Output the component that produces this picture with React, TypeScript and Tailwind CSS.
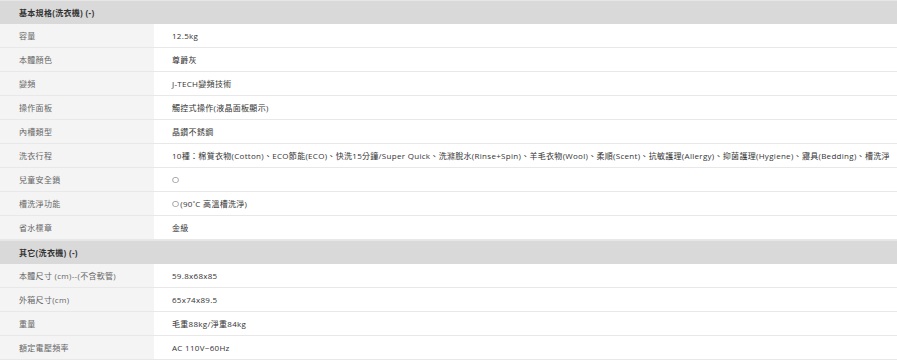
const basicSpecs: [string, string][] = [
  ['容量', '12.5kg'],
  ['本體顏色', '尊爵灰'],
  ['變頻', 'J-TECH變頻技術'],
  ['操作面板', '觸控式操作(液晶面板顯示)'],
  ['內槽類型', '晶鑽不銹鋼'],
  [
    '洗衣行程',
    '10種：棉質衣物(Cotton)、ECO節能(ECO)、快洗15分鐘/Super Quick、洗滌脫水(Rinse+Spin)、羊毛衣物(Wool)、柔順(Scent)、抗敏護理(Allergy)、抑菌護理(Hygiene)、寢具(Bedding)、槽洗淨',
  ],
  ['兒童安全鎖', '○'],
  ['槽洗淨功能', '○(90˚C 高溫槽洗淨)'],
  ['省水標章', '金級'],
]

const otherSpecs: [string, string][] = [
  ['本體尺寸 (cm)--(不含軟管)', '59.8x68x85'],
  ['外箱尺寸(cm)', '65x74x89.5'],
  ['重量', '毛重88kg/淨重84kg'],
  ['額定電壓頻率', 'AC 110V~60Hz'],
]

function SectionHeader({ title }: { title: string }) {
  return (
    <div className="flex h-[24px] items-center bg-[#d9d9d9] border-t border-[#e6e6e6] pl-[19px] text-[8px] font-bold text-[#333]">
      {title}
    </div>
  )
}

// circle glyph from DejaVu, the CJK one is too big at this size
function renderValue(value: string) {
  if (!value.startsWith('○')) return value
  return (
    <>
      <span className="mr-[1px] text-[8px] text-[#444]" style={{ fontFamily: '"DejaVu Sans", sans-serif' }}>
        ○
      </span>
      {value.slice(1)}
    </>
  )
}

function SpecRow({ label, value }: { label: string; value: string }) {
  return (
    <div className="flex h-[24px] border-b border-[#e8e8e8]">
      <div className="flex w-[154px] shrink-0 items-center bg-[#f4f4f4] pl-[19px] text-[#666]">
        {label}
      </div>
      <div className="flex flex-1 items-center overflow-hidden whitespace-nowrap bg-white pl-[18px] text-[#333]">
        {renderValue(value)}
      </div>
    </div>
  )
}

export default function App() {
  return (
    <div
      className="w-[897px] h-[364px] overflow-hidden bg-white text-[8px] tracking-[0.3px]"
      style={{ fontFamily: '"Open Sans", "Noto Sans CJK TC", sans-serif' }}
    >
      {/* 基本規格 */}
      <SectionHeader title="基本規格(洗衣機) (-)" />
      {basicSpecs.map(([label, value]) => (
        <SpecRow key={label} label={label} value={value} />
      ))}

      {/* 其它 */}
      <SectionHeader title="其它(洗衣機) (-)" />
      {otherSpecs.map(([label, value]) => (
        <SpecRow key={label} label={label} value={value} />
      ))}
    </div>
  )
}
